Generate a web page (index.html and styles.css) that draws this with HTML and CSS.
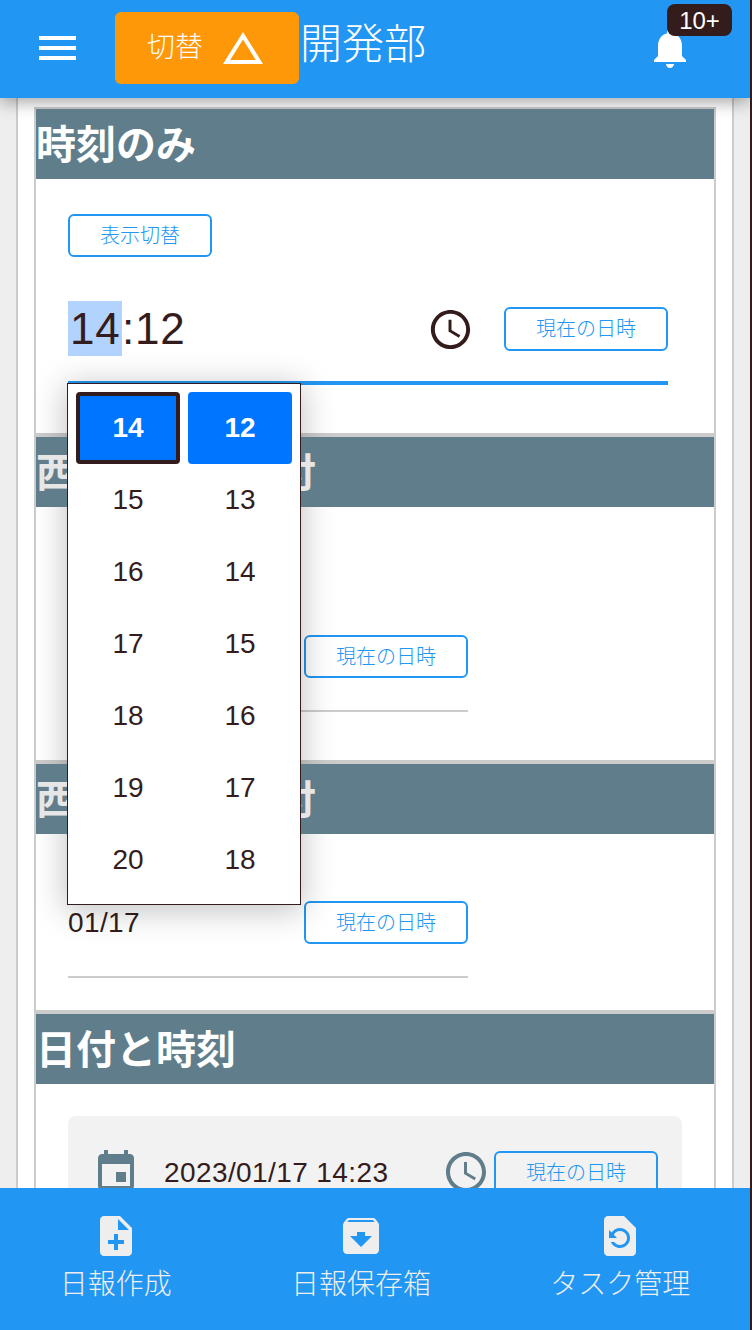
FILE: index.html
```html
<!DOCTYPE html>
<html lang="ja">
<head>
<meta charset="utf-8">
<title>開発部</title>
<link rel="stylesheet" href="styles.css">
</head>
<body>
<div class="app">
  <header class="topbar">
    <svg class="menu-icon" viewBox="0 0 37 24" fill="currentColor"><path d="M0 0h37v4H0zM0 10h37v4H0zM0 20h37v4H0z"/></svg>
    <button class="switch-btn">切替
      <svg class="icon" viewBox="0 0 24 24"><path d="M12 7.77L18.39 18H5.61L12 7.77M12 4L2 20h20L12 4z"/></svg>
    </button>
    <h1 class="title">開発部</h1>
    <div class="bell">
      <svg class="icon" viewBox="0 0 24 24"><path d="M12 22c1.1 0 2-.9 2-2h-4c0 1.1.89 2 2 2zm6-6v-5c0-3.07-1.64-5.64-4.5-6.32V4c0-.83-.67-1.5-1.5-1.5s-1.5.67-1.5 1.5v.68C7.63 5.36 6 7.92 6 11v5l-2 2v1h16v-1l-2-2z"/></svg>
      <span class="badge">10+</span>
    </div>
  </header>

  <main class="content">
    <div class="panel">
      <section class="card card-time">
        <h2 class="card-head">時刻のみ</h2>
        <div class="card-body">
          <button class="outline-btn">表示切替</button>
          <div class="time-field">
            <div class="time-value"><span class="hour">14</span>:12</div>
            <svg class="icon clock" viewBox="0 0 24 24"><path d="M11.99 2C6.47 2 2 6.48 2 12s4.47 10 9.99 10C17.52 22 22 17.52 22 12S17.52 2 11.99 2zM12 20c-4.42 0-8-3.58-8-8s3.58-8 8-8 8 3.58 8 8-3.58 8-8 8zm.5-13H11v6l5.25 3.15.75-1.23-4.5-2.67z"/></svg>
            <button class="outline-btn">現在の日時</button>
            <div class="picker">
              <div class="picker-list">
                <span class="cell selected focused">14</span><span class="cell selected">12</span>
                <span class="cell">15</span><span class="cell">13</span>
                <span class="cell">16</span><span class="cell">14</span>
                <span class="cell">17</span><span class="cell">15</span>
                <span class="cell">18</span><span class="cell">16</span>
                <span class="cell">19</span><span class="cell">17</span>
                <span class="cell">20</span><span class="cell">18</span>
              </div>
            </div>
          </div>
        </div>
      </section>

      <section class="card card-date">
        <h2 class="card-head shaded">西暦ありの日付</h2>
        <div class="card-body">
          <div class="date-field"><span></span><button class="outline-btn">現在の日時</button></div>
        </div>
      </section>

      <section class="card card-short">
        <h2 class="card-head shaded">西暦なしの日付</h2>
        <div class="card-body">
          <div class="date-field"><span>01/17</span><button class="outline-btn">現在の日時</button></div>
        </div>
      </section>

      <section class="card card-datetime">
        <h2 class="card-head">日付と時刻</h2>
        <div class="card-body">
          <div class="filled-field">
            <svg class="icon" viewBox="0 0 24 24"><path d="M17 12h-5v5h5v-5zM16 1v2H8V1H6v2H5c-1.11 0-1.99.9-1.99 2L3 19c0 1.1.89 2 2 2h14c1.1 0 2-.9 2-2V5c0-1.1-.9-2-2-2h-1V1h-2zm3 18H5V8h14v11z"/></svg>
            <span class="filled-value">2023/01/17 14:23</span>
            <svg class="icon" viewBox="0 0 24 24"><path d="M11.99 2C6.47 2 2 6.48 2 12s4.47 10 9.99 10C17.52 22 22 17.52 22 12S17.52 2 11.99 2zM12 20c-4.42 0-8-3.58-8-8s3.58-8 8-8 8 3.58 8 8-3.58 8-8 8zm.5-13H11v6l5.25 3.15.75-1.23-4.5-2.67z"/></svg>
            <button class="outline-btn">現在の日時</button>
          </div>
        </div>
      </section>
    </div>
  </main>

  <nav class="bottombar">
    <a class="tab">
      <svg class="icon" viewBox="0 0 24 24"><path d="M14 2H6c-1.1 0-1.99.9-1.99 2L4 20c0 1.1.89 2 1.99 2H18c1.1 0 2-.9 2-2V8l-6-6zm2 14h-3v3h-2v-3H8v-2h3v-3h2v3h3v2zm-3-7V3.5L18.5 9H13z"/></svg>
      日報作成
    </a>
    <a class="tab">
      <svg class="icon" viewBox="0 0 24 24"><path d="M20.54 5.23l-1.39-1.68C18.88 3.21 18.47 3 18 3H6c-.47 0-.88.21-1.16.55L3.46 5.23C3.17 5.57 3 6.02 3 6.5V19c0 1.1.9 2 2 2h14c1.1 0 2-.9 2-2V6.5c0-.48-.17-.93-.46-1.27zM12 17.5L6.5 12H10v-2h4v2h3.5L12 17.5zM5.12 5l.81-1h12l.94 1H5.12z"/></svg>
      日報保存箱
    </a>
    <a class="tab">
      <svg class="icon" viewBox="0 0 24 24"><path d="M14 2H6c-1.1 0-2 .9-2 2v16c0 1.1.9 2 2 2h12c1.1 0 2-.9 2-2V8l-6-6zm-2 16c-2.05 0-3.81-1.24-4.58-3h1.71c.63.9 1.68 1.5 2.87 1.5 1.93 0 3.5-1.57 3.5-3.5S13.93 9.5 12 9.5c-1.35 0-2.52.78-3.1 1.9l1.6 1.6h-4V9l1.3 1.3C8.69 8.92 10.23 8 12 8c2.76 0 5 2.24 5 5s-2.24 5-5 5z"/></svg>
      タスク管理
    </a>
  </nav>
</div>
</body>
</html>
```

FILE: styles.css
```css
* { box-sizing: border-box; }

body {
  margin: 0;
  background: #351c1c;
  color: #351c1c;
  font-family: "Liberation Sans", "Noto Sans CJK JP", sans-serif;
  font-size: 28px;
  font-weight: 300;
}

button {
  font: inherit;
  cursor: pointer;
}

.icon {
  display: block;
  flex: none;
  width: 48px;
  height: 48px;
  fill: currentColor;
}

.app {
  display: flex;
  flex-direction: column;
  width: 750px;
  height: 1330px;
  overflow: hidden;
  background: #eee;
}

/* Top bar */
.topbar {
  position: relative;
  z-index: 1;
  display: flex;
  flex: none;
  align-items: flex-start;
  height: 98px;
  padding: 12px 56px 0 39px;
  background: #2196f3;
  color: #fff;
  box-shadow: 0 4px 16px rgba(0, 0, 0, .36);
}

.menu-icon {
  width: 37px;
  height: 24px;
  margin: 24px 39px 0 0;
}

.switch-btn {
  display: flex;
  align-items: center;
  gap: 16px;
  width: 184px;
  height: 72px;
  padding: 0 32px;
  border: 0;
  border-radius: 6px;
  background: #ff9808;
  color: #fff;
  line-height: 72px;
  white-space: nowrap;
}

.title {
  margin: 0 0 0 1px;
  font-size: 42px;
  font-weight: 300;
  line-height: 66px;
}

.bell {
  position: relative;
  margin: 12px 0 0 auto;
}

.badge {
  position: absolute;
  top: -20px;
  left: 21px;
  width: 65px;
  height: 32px;
  border-radius: 8px;
  background: #351c1c;
  font-size: 24px;
  line-height: 34px;
  text-align: center;
}

/* Scrolling content */
.content {
  flex: 1;
  min-height: 0;
  padding: 0 16px;
  overflow: hidden;
}

.panel {
  height: 1400px;
  padding: 9px 16px 0;
  border: solid #ccc;
  border-width: 0 2px;
  background: #fff;
}

.card {
  border: 2px solid #ccc;
}

.card-time { height: 328px; }
.card-date { height: 327px; }
.card-short { height: 250px; }
.card-datetime { height: 300px; }

.card-head {
  position: relative;
  z-index: 2;
  height: 70px;
  margin: 0;
  background: #607d8b;
  color: #fff;
  font-size: 40px;
  font-weight: 700;
  line-height: 72px;
}

.shaded { color: #e6e6e6; }

.card-body { padding: 35px 32px 0; }
.card-date .card-body { padding-top: 128px; }
.card-short .card-body { padding-top: 67px; }
.card-datetime .card-body { padding-top: 32px; }

.outline-btn {
  display: block;
  flex: none;
  height: 43px;
  padding: 2px 30px 0;
  border: 2px solid #2196f3;
  border-radius: 6px;
  background: transparent;
  color: #2196f3;
  font-size: 20px;
  line-height: 37px;
  letter-spacing: 0;
}

.time-field {
  position: relative;
  display: flex;
  align-items: center;
  width: 600px;
  height: 128px;
  padding-top: 20px;
  border-bottom: 4px solid #2196f3;
}

.time-value {
  padding-bottom: 1px;
  font-size: 44px;
  letter-spacing: .8px;
  line-height: 55px;
}

.hour {
  display: inline-block;
  width: 54px;
  padding-left: 2px;
  background: #b1d3fd;
}

.clock {
  width: 47px;
  height: 47px;
  margin: 0 30px 0 auto;
}

.time-field .outline-btn {
  height: 44px;
  padding-top: 1px;
}

/* Time picker */
.picker {
  position: absolute;
  top: 126px;
  left: -1px;
  width: 234px;
  height: 522px;
}

.picker::before {
  content: "";
  position: absolute;
  z-index: 1;
  inset: 0;
  box-shadow: 0 4px 30px 2px rgba(0, 0, 0, .24);
}

.picker-list {
  position: relative;
  z-index: 3;
  display: grid;
  grid-template-columns: 104px 104px;
  grid-auto-rows: 72px;
  column-gap: 8px;
  padding: 8px;
  border: 1px solid #351c1c;
  background: #fff;
}

.cell {
  display: flex;
  align-items: center;
  justify-content: center;
  border-radius: 4px;
}

.selected {
  background: #0075ff;
  color: #fff;
  font-weight: 700;
}

.focused { border: 4px solid #351c1c; }

/* Date fields */
.date-field {
  display: flex;
  align-items: center;
  justify-content: space-between;
  width: 400px;
  height: 77px;
  padding-bottom: 32px;
  border-bottom: 2px solid #ccc;
  letter-spacing: .4px;
}

.filled-field {
  display: flex;
  align-items: center;
  width: 614px;
  height: 112px;
  padding: 0 24px;
  border-radius: 8px;
  background: #f2f2f2;
  color: #607d8b;
}

.filled-value {
  flex: 1;
  margin-left: 24px;
  padding-top: 2px;
  color: #351c1c;
  letter-spacing: .4px;
}

.filled-field .outline-btn { margin-left: 4px; }

/* Bottom navigation */
.bottombar {
  position: relative;
  z-index: 4;
  display: flex;
  flex: none;
  justify-content: space-around;
  height: 142px;
  padding-top: 24px;
  background: #2196f3;
  color: #eee;
}

.tab {
  display: flex;
  flex-direction: column;
  align-items: center;
  line-height: 50px;
}
```
